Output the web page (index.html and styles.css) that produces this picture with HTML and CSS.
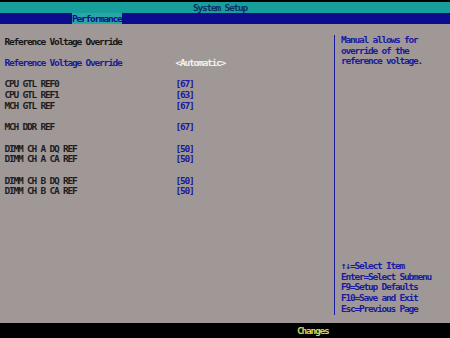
FILE: index.html
```html
<!DOCTYPE html>
<html lang="en">
<head>
    <meta charset="UTF-8">
    <title>System Setup</title>
    <link rel="stylesheet" href="styles.css">
</head>
<body>
    <div class="screen">
        <div class="titlebar">System Setup</div>
        <div class="menubar"><span class="tab">Performance</span></div>

        <div class="main">
            <div class="items">
                <div class="row heading">Reference Voltage Override</div>
                <div class="row"></div>
                <div class="row selected"><span class="label">Reference Voltage Override</span><span class="value">&lt;Automatic&gt;</span></div>
                <div class="row"></div>
                <div class="row"><span class="label">CPU GTL REF0</span><span class="value">[67]</span></div>
                <div class="row"><span class="label">CPU GTL REF1</span><span class="value">[63]</span></div>
                <div class="row"><span class="label">MCH GTL REF</span><span class="value">[67]</span></div>
                <div class="row"></div>
                <div class="row"><span class="label">MCH DDR REF</span><span class="value">[67]</span></div>
                <div class="row"></div>
                <div class="row"><span class="label">DIMM CH A DQ REF</span><span class="value">[50]</span></div>
                <div class="row"><span class="label">DIMM CH A CA REF</span><span class="value">[50]</span></div>
                <div class="row"></div>
                <div class="row"><span class="label">DIMM CH B DQ REF</span><span class="value">[50]</span></div>
                <div class="row"><span class="label">DIMM CH B CA REF</span><span class="value">[50]</span></div>
            </div>

            <div class="help">
                <div class="help-text">
                    <div class="row">Manual allows for</div>
                    <div class="row">override of the</div>
                    <div class="row">reference voltage.</div>
                </div>
                <div class="keys">
                    <div class="row">&uarr;&darr;=Select Item</div>
                    <div class="row">Enter=Select Submenu</div>
                    <div class="row">F9=Setup Defaults</div>
                    <div class="row">F10=Save and Exit</div>
                    <div class="row">Esc=Previous Page</div>
                </div>
            </div>
        </div>

        <div class="footer">Changes</div>
    </div>
</body>
</html>
```

FILE: styles.css
```css
body {
    margin: 0;
    background-color: #000;
}
.screen {
    width: 450px;
    height: 338px;
    display: flex;
    flex-direction: column;
    font-family: "DejaVu Sans Mono", "Liberation Mono", monospace;
    font-weight: bold;
    font-size: 9.5px;
    letter-spacing: -1.22px;
    color: #1e1e1e;
}
.row {
    height: 10.7px;
    line-height: 10.7px;
    white-space: pre;
}
.titlebar {
    margin-top: 2px;
    height: 11px;
    line-height: 11px;
    padding-left: 193px;
    background-color: #17a09b;
    color: #0d2f6a;
}
.menubar {
    height: 11px;
    line-height: 11px;
    padding-left: 72px;
    background-color: #0c0c8c;
}
.tab {
    display: inline-block;
    background-color: #2aa6a6;
    color: #0c0c8c;
}
.main {
    flex: 1;
    display: flex;
    background-color: #9f9896;
}
.items {
    width: 329px;
    padding: 12.7px 0 0 4.5px;
}
.heading {
    color: #161616;
}
.label {
    display: inline-block;
    width: 171px;
}
.value {
    color: #1a1a9e;
}
.selected .label {
    color: #1a1a9e;
}
.selected .value {
    color: #f2f2f2;
}
.help {
    flex: 1;
    margin: 11px 0 8.5px;
    padding-left: 6.5px;
    border-left: 1.5px solid #1a1a9e;
    display: flex;
    flex-direction: column;
    justify-content: space-between;
    color: #1a1a9e;
}
.footer {
    height: 15px;
    line-height: 15px;
    padding-left: 297px;
    color: #d6d65a;
}
```
